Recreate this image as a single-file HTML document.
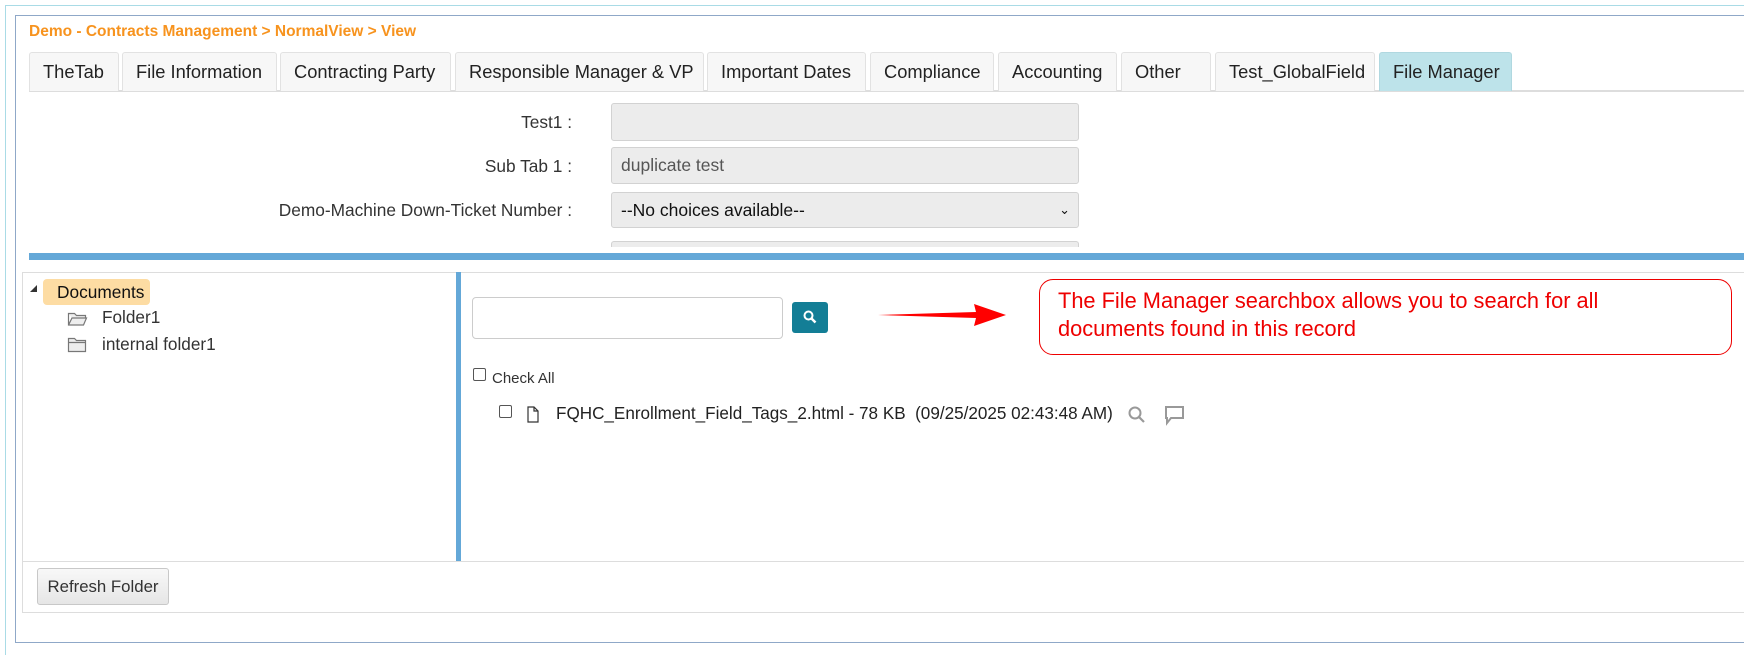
<!DOCTYPE html>
<html><head><style>
*{box-sizing:border-box}
body{margin:0;width:1744px;height:656px;background:#fff;font-family:"Liberation Sans",sans-serif;color:#333;position:relative;overflow:hidden}
.a{position:absolute}
.tab{position:absolute;top:52px;height:39px;background:#f7f7f7;border:1px solid #e2e2e2;border-bottom:none;border-radius:3px 3px 0 0;font-size:18.3px;line-height:38px;padding-left:13px;color:#222;white-space:nowrap}
.lbl{position:absolute;font-size:17.3px;text-align:right;right:1172px;color:#333;white-space:nowrap}
.inp{position:absolute;left:611px;width:468px;background:#ececec;border:1px solid #d2d2d2;border-radius:3px;font-size:17.5px;padding-left:9px;color:#555}
</style></head><body>
<div class="a" style="left:5px;top:5px;width:1745px;height:650px;border:1px solid #a9dbe6;border-right:none;border-bottom:none"></div>
<div class="a" style="left:15px;top:15px;width:1735px;height:628px;border:1px solid #8fa8c8;border-right:none"></div>
<div class="a" style="left:29px;top:23px;font-size:15.5px;font-weight:bold;color:#f7931e;white-space:nowrap">Demo - Contracts Management &gt; NormalView &gt; View</div>

<div class="a" style="left:29px;top:90px;width:1715px;height:2px;background:#ddd"></div>
<div class="tab" style="left:29px;width:90px">TheTab</div>
<div class="tab" style="left:122px;width:155px">File Information</div>
<div class="tab" style="left:280px;width:171px">Contracting Party</div>
<div class="tab" style="left:455px;width:249px">Responsible Manager &amp; VP</div>
<div class="tab" style="left:707px;width:159px">Important Dates</div>
<div class="tab" style="left:870px;width:124px">Compliance</div>
<div class="tab" style="left:998px;width:119px">Accounting</div>
<div class="tab" style="left:1121px;width:90px">Other</div>
<div class="tab" style="left:1215px;width:160px">Test_GlobalField</div>
<div class="tab" style="left:1379px;width:133px;background:#bde3ea;border-color:#b0d8e0">File Manager</div>

<div class="lbl" style="top:112px">Test1 :</div>
<div class="inp" style="top:103px;height:38px"></div>
<div class="lbl" style="top:156px">Sub Tab 1 :</div>
<div class="inp" style="top:147px;height:37px;line-height:35px">duplicate test</div>
<div class="lbl" style="top:200px">Demo-Machine Down-Ticket Number :</div>
<div class="inp" style="top:192px;height:36px;line-height:34px;color:#111">--No choices available--<span style="position:absolute;right:8px;top:0;font-size:13px">&#8964;</span></div>
<div class="a" style="left:611px;top:241px;width:468px;height:6px;background:#ececec;border:1px solid #d2d2d2;border-bottom:none;border-radius:3px 3px 0 0"></div>

<div class="a" style="left:29px;top:253px;width:1715px;height:7px;background:#64a8d8"></div>

<div class="a" style="left:22px;top:272px;width:1722px;height:341px;border:1px solid #ddd;border-right:none"></div>
<div class="a" style="left:456px;top:272px;width:5px;height:289px;background:#64a8d8"></div>
<div class="a" style="left:23px;top:561px;width:1721px;height:1px;background:#ddd"></div>

<div class="a" style="left:30px;top:285px;width:0;height:0;border-left:7px solid transparent;border-bottom:7px solid #333"></div>
<div class="a" style="left:43px;top:279px;width:107px;height:26px;background:#fddca3;border-radius:4px;font-size:17.3px;line-height:26px;padding-left:14px;color:#111">Documents</div>
<svg class="a" style="left:67px;top:310px" width="22" height="16"><path d="M1.5 3.5h6l2 2h9v2.5H5l-3.5 7z M1.5 3.5v11.5h15l3-7H5" fill="#eee" stroke="#777" stroke-width="1.2"/></svg>
<div class="a" style="left:102px;top:307px;font-size:17.2px">Folder1</div>
<svg class="a" style="left:67px;top:336px" width="22" height="17"><path d="M1.5 2.5h6l2 2h9v11h-17z M1.5 6.5h17" fill="#eee" stroke="#777" stroke-width="1.2"/></svg>
<div class="a" style="left:102px;top:334px;font-size:17.2px">internal folder1</div>

<div class="a" style="left:472px;top:297px;width:311px;height:42px;border:1px solid #ccc;border-radius:4px"></div>
<div class="a" style="left:792px;top:302px;width:36px;height:31px;background:#137e96;border-radius:3px"></div>
<svg class="a" style="left:802px;top:309px" width="16" height="16"><circle cx="6.5" cy="6.5" r="4" fill="none" stroke="#fff" stroke-width="2"/><path d="M9.5 9.5l4 4" stroke="#fff" stroke-width="2.5"/></svg>

<svg class="a" style="left:876px;top:302px" width="134" height="26"><path d="M2 13 L100 10 L98 2 L130 13 L98 24 L100 16 Z" fill="#f00"/></svg>
<div class="a" style="left:1039px;top:279px;width:693px;height:76px;border:1.5px solid #e00;border-radius:14px;color:#e00;font-size:21.8px;line-height:28px;padding:7px 0 0 18px;white-space:nowrap">The File Manager searchbox allows you to search for all<br>documents found in this record</div>

<div class="a" style="left:473px;top:368px;width:13px;height:13px;border:1px solid #555;border-radius:2px"></div>
<div class="a" style="left:492px;top:370px;font-size:15px">Check All</div>
<div class="a" style="left:499px;top:405px;width:13px;height:13px;border:1px solid #555;border-radius:2px"></div>
<svg class="a" style="left:527px;top:406px" width="12" height="17"><path d="M1 1h6l4 4v11H1z M7 1v4h4" fill="none" stroke="#333" stroke-width="1.2"/></svg>
<div class="a" style="left:556px;top:404px;font-size:17.1px;color:#222;white-space:nowrap">FQHC_Enrollment_Field_Tags_2.html - 78 KB&nbsp; (09/25/2025 02:43:48 AM)</div>
<svg class="a" style="left:1127px;top:405px" width="22" height="20"><circle cx="8" cy="8" r="5.5" fill="none" stroke="#999" stroke-width="2"/><path d="M12 12l5 5" stroke="#999" stroke-width="2.2"/></svg>
<svg class="a" style="left:1163px;top:404px" width="24" height="22"><path d="M3 3h17v11H8l-4 5v-5H3z" fill="none" stroke="#999" stroke-width="2"/></svg>

<div class="a" style="left:37px;top:568px;width:132px;height:37px;background:linear-gradient(#f8f8f8,#e6e6e6);border:1px solid #c8c8c8;border-radius:3px;font-size:16.8px;line-height:35px;text-align:center;color:#333;white-space:nowrap">Refresh Folder</div>
</body></html>
